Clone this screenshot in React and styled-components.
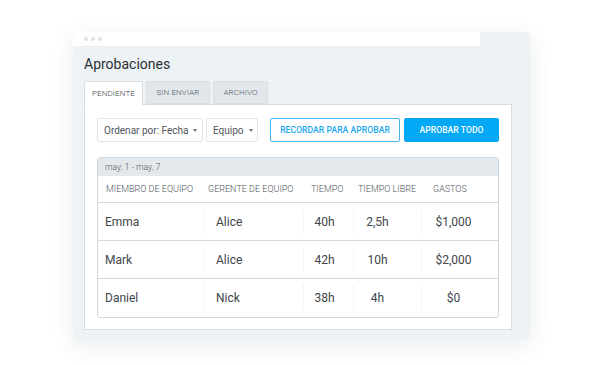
import styled, { createGlobalStyle } from 'styled-components';

const GlobalStyle = createGlobalStyle`
  body {
    margin: 0;
    background: #ffffff;
    font-family: Roboto, "Liberation Sans", Arial, sans-serif;
  }
`;

const Page = styled.div`
  width: 604px;
  height: 365px;
  padding: 32px 0 0 73px;
  box-sizing: border-box;
`;

const Window = styled.div`
  width: 457px;
  height: 307px;
  background: #edf2f5;
  border-radius: 4px;
  box-shadow: 0 6px 22px rgba(40, 60, 80, 0.1);
  display: flex;
  flex-direction: column;
  overflow: hidden;
`;

const TitleBar = styled.div`
  flex-shrink: 0;
  width: 407px;
  height: 14px;
  background: #ffffff;
  display: flex;
  align-items: center;
  gap: 3px;
  padding-left: 11px;
  box-sizing: border-box;
`;

const Dot = styled.span`
  width: 4px;
  height: 4px;
  border-radius: 50%;
  background: #dde2e8;
`;

const Body = styled.div`
  flex: 1;
  min-height: 0;
  display: flex;
  flex-direction: column;
  padding: 0 18px 9px 11px;
`;

const Title = styled.h1`
  flex-shrink: 0;
  margin: 0;
  height: 35px;
  display: flex;
  align-items: center;
  box-sizing: border-box;
  font-size: 14px;
  font-weight: 400;
  color: #2b2f33;
`;

const Tabs = styled.div`
  flex-shrink: 0;
  display: flex;
  gap: 3px;
  height: 23px;
  position: relative;
  z-index: 1;
`;

const Tab = styled.div`
  width: ${p => p.$w}px;
  box-sizing: border-box;
  display: flex;
  align-items: center;
  justify-content: center;
  font-size: 8px;
  font-weight: 300;
  letter-spacing: 0.1px;
  color: ${p => (p.$active ? '#3e4449' : '#50575d')};
  background: ${p => (p.$active ? '#ffffff' : '#e2e7eb')};
  border: 1px solid #d6dde3;
  border-bottom: ${p => (p.$active ? '1px solid #ffffff' : '1px solid #d6dde3')};
  border-radius: 2px 2px 0 0;
  height: ${p => (p.$active ? 24 : 23)}px;
`;

const Panel = styled.div`
  flex: 1;
  min-height: 0;
  background: #ffffff;
  border: 1px solid #d6dde3;
  padding: 13px 12px 11px 12px;
  display: flex;
  flex-direction: column;
  gap: 15px;
`;

const Toolbar = styled.div`
  flex-shrink: 0;
  display: flex;
  align-items: center;
  height: 24px;
`;

const Select = styled.div`
  height: 24px;
  box-sizing: border-box;
  width: ${p => p.$w}px;
  margin-right: ${p => p.$mr}px;
  border: 1px solid #e1e5e9;
  border-radius: 2px;
  display: flex;
  align-items: center;
  padding-left: 6px;
  gap: 5px;
  font-size: 10px;
  color: #4f555a;
  white-space: nowrap;
`;

const Caret = styled.span`
  width: 0;
  height: 0;
  border-left: 2.5px solid transparent;
  border-right: 2.5px solid transparent;
  border-top: 3px solid #70767b;
`;

const Button = styled.button`
  height: 24px;
  box-sizing: border-box;
  width: ${p => p.$w}px;
  margin-left: ${p => p.$ml}px;
  border-radius: 2px;
  font-family: inherit;
  font-size: 8.5px;
  font-weight: 500;
  letter-spacing: 0.1px;
  padding: 0;
  cursor: pointer;
  color: ${p => (p.$primary ? '#ffffff' : '#1ba6ef')};
  background: ${p => (p.$primary ? '#03a9f4' : '#ffffff')};
  border: 1px solid ${p => (p.$primary ? '#03a9f4' : '#45b4f0')};
`;

const Table = styled.div`
  flex-shrink: 0;
  border: 1px solid #cfd8df;
  border-radius: 3px;
  overflow: hidden;
`;

const DateBar = styled.div`
  height: 18px;
  background: #e3e8ec;
  display: flex;
  align-items: center;
  padding-left: 7px;
  font-size: 8.5px;
  font-weight: 300;
  color: #50565c;
`;

const HeaderRow = styled.div`
  height: 27px;
  box-sizing: border-box;
  display: grid;
  grid-template-columns: 102px 103px 47px 75px 1fr;
  align-items: center;
  padding-left: 8px;
  border-bottom: 1px solid #d2dae0;
  font-size: 9px;
  font-weight: 300;
  color: #50565c;
  white-space: nowrap;
`;

const Row = styled.div`
  height: 38px;
  box-sizing: border-box;
  display: grid;
  grid-template-columns: 105px 100px 50px 68px 1fr;
  border-bottom: ${p => (p.$last ? 'none' : '1px solid #d2dae0')};
  font-size: 12px;
  color: #40454a;
`;

const Cell = styled.div`
  display: flex;
  align-items: center;
  justify-content: ${p => (p.$center ? 'center' : 'flex-start')};
  padding-left: ${p => p.$pl || 0}px;
  padding-right: ${p => p.$pr || 0}px;
  margin: 7px 0;
  border-left: ${p => (p.$divider ? '1px dotted #e9edf0' : 'none')};
`;

const rows = [
  { name: 'Emma', manager: 'Alice', time: '40h', off: '2,5h', cost: '$1,000' },
  { name: 'Mark', manager: 'Alice', time: '42h', off: '10h', cost: '$2,000' },
  { name: 'Daniel', manager: 'Nick', time: '38h', off: '4h', cost: '$0' },
];

const App = () => {
  return (
    <>
      <GlobalStyle />
      <Page>
        <Window>
          <TitleBar>
            <Dot />
            <Dot />
            <Dot />
          </TitleBar>
          <Body>
            <Title>Aprobaciones</Title>
            <Tabs>
              <Tab $active $w={59}>PENDIENTE</Tab>
              <Tab $w={64}>SIN ENVIAR</Tab>
              <Tab $w={55}>ARCHIVO</Tab>
            </Tabs>
            <Panel>
              <Toolbar>
                <Select $w={106} $mr={3}>
                  Ordenar por: Fecha <Caret />
                </Select>
                <Select $w={52} $mr={0}>
                  Equipo <Caret />
                </Select>
                <Button $w={130} $ml={12}>RECORDAR PARA APROBAR</Button>
                <Button $primary $w={95} $ml={4}>APROBAR TODO</Button>
              </Toolbar>
              <Table>
                <DateBar>may. 1 - may. 7</DateBar>
                <HeaderRow>
                  <span>MIEMBRO DE EQUIPO</span>
                  <span>GERENTE DE EQUIPO</span>
                  <span>TIEMPO</span>
                  <span>TIEMPO LIBRE</span>
                  <span>GASTOS</span>
                </HeaderRow>
                {rows.map((r, i) => (
                  <Row key={r.name} $last={i === rows.length - 1}>
                    <Cell $pl={7}>{r.name}</Cell>
                    <Cell $divider $pl={12}>{r.manager}</Cell>
                    <Cell $divider $center $pr={8}>{r.time}</Cell>
                    <Cell $divider $center $pr={20}>{r.off}</Cell>
                    <Cell $divider $center $pr={13}>{r.cost}</Cell>
                  </Row>
                ))}
              </Table>
            </Panel>
          </Body>
        </Window>
      </Page>
    </>
  );
};

export default App;
